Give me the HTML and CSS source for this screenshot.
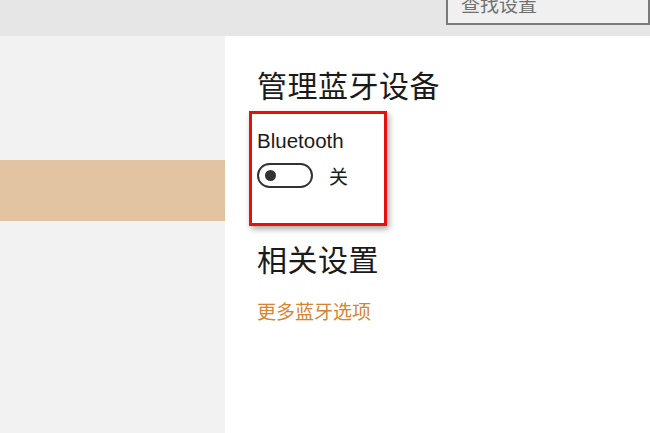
FILE: index.html
```html
<!DOCTYPE html>
<html lang="zh-CN">
<head>
<meta charset="utf-8">
<link rel="stylesheet" href="styles.css">
</head>
<body>
<div class="app">
  <header class="topbar">
    <div class="search"><span class="search-text">查找设置</span></div>
  </header>
  <div class="main">
    <aside class="sidebar">
      <div class="nav-item selected"></div>
    </aside>
    <section class="content">
      <h1 class="title">管理蓝牙设备</h1>
      <div class="highlight">
        <div class="label">Bluetooth</div>
        <div class="toggle-row">
          <span class="toggle"><span class="knob"></span></span>
          <span class="state">关</span>
        </div>
      </div>
      <h2 class="title sub">相关设置</h2>
      <a class="link">更多蓝牙选项</a>
    </section>
  </div>
</div>
</body>
</html>
```
FILE: styles.css
```css
html, body { margin: 0; padding: 0; }
body {
  width: 650px; height: 433px; overflow: hidden;
  font-family: "Noto Sans CJK SC", "Liberation Sans", sans-serif;
  background: #fff;
}
.app { display: flex; flex-direction: column; height: 433px; }
.topbar {
  height: 36px; background: #e6e6e6; flex: none;
  display: flex; justify-content: flex-end; align-items: flex-start;
}
.search {
  margin-top: -8px; margin-left: 446px;
  width: 210px; height: 33px; box-sizing: border-box;
  border: 2px solid #7a7a7a; background: #f0f0f0;
  display: flex; align-items: flex-start; padding-left: 13px;
}
.search-text { font-size: 19px; color: #6f6f6f; line-height: 1; margin-top: 0; }
.main { flex: 1; display: flex; }
.sidebar { width: 225px; background: #f2f2f2; flex: none; padding-top: 124px; box-sizing: border-box; }
.nav-item.selected { height: 61px; background: #e2c4a2; }
.content { flex: 1; padding-left: 32px; }
.title {
  margin: 27px 0 0 0; font-size: 30px; font-weight: 400; color: #1a1a1a; line-height: 42px;
  letter-spacing: 0.5px;
}
.highlight {
  margin: 6px 0 0 -8px; width: 138px; height: 115px; box-sizing: border-box;
  border: 3px solid #e51010; padding: 15px 0 0 5px;
  box-shadow: 2px 3px 6px rgba(0,0,0,0.35);
}
.label { font-family: "Liberation Sans", "Noto Sans", sans-serif; font-size: 20.5px; color: #1a1a1a; line-height: 24px; }
.toggle-row { display: flex; align-items: center; margin-top: 10px; }
.toggle {
  width: 56px; height: 25px; box-sizing: border-box; border: 2.5px solid #333;
  border-radius: 13px; position: relative; display: inline-block;
}
.knob {
  position: absolute; left: 6px; top: 5px; width: 11px; height: 11px;
  border-radius: 50%; background: #333;
}
.state { font-size: 19px; color: #1a1a1a; margin-left: 16px; line-height: 1; }
.sub { margin-top: 11px; }
.link { display: block; margin-top: 20px; font-size: 19px; color: #d7832f; line-height: 24px; }
```
